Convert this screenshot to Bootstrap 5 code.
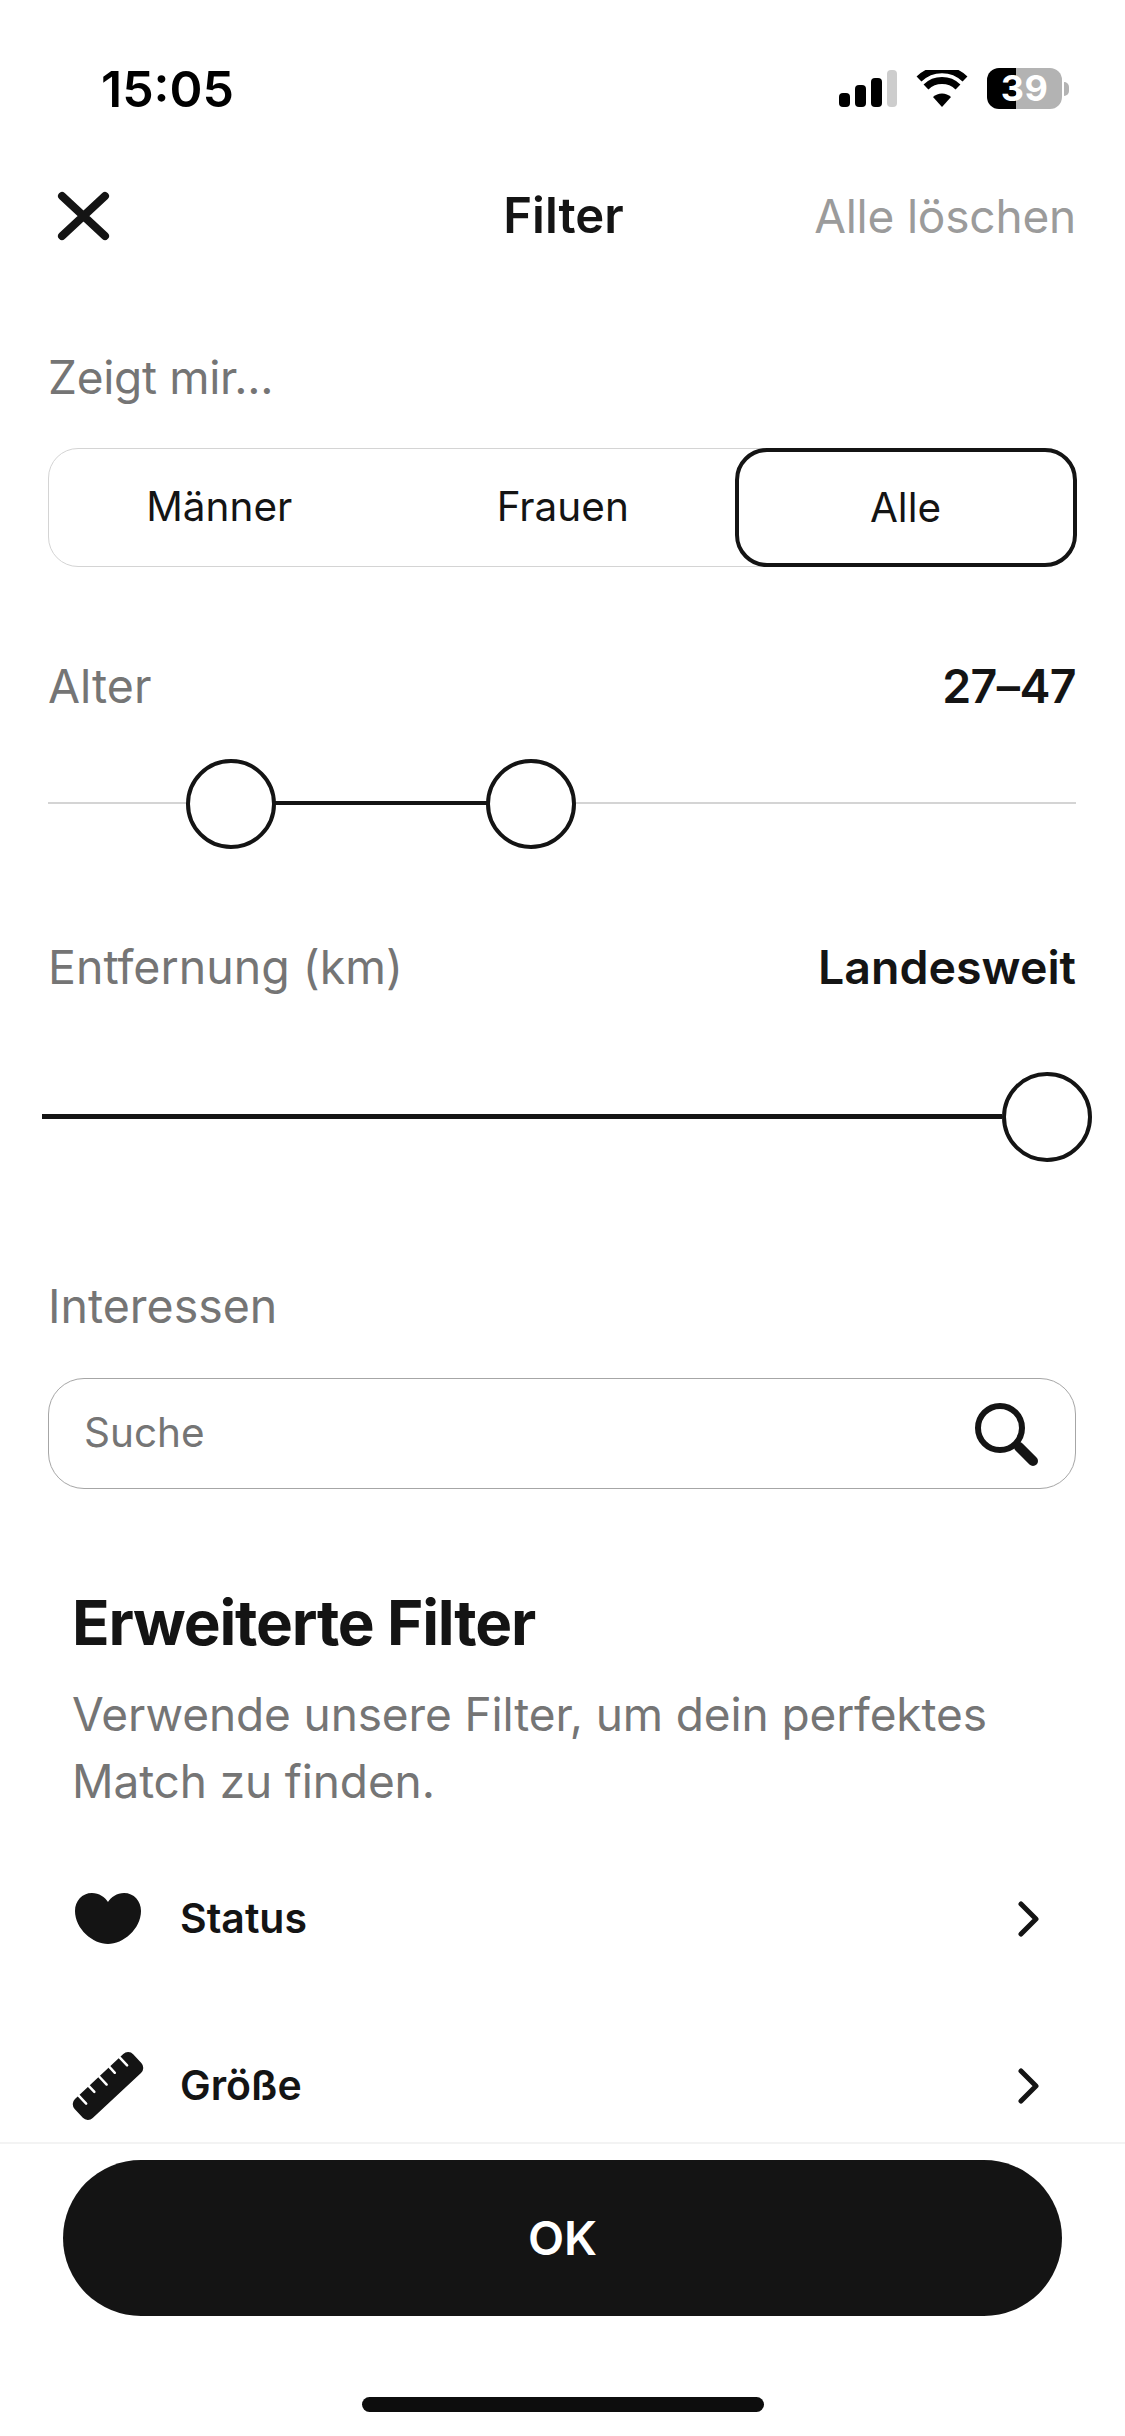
<!DOCTYPE html>
<html lang="de">
<head>
    <meta charset="UTF-8" />
    <meta name="viewport" content="width=device-width, initial-scale=1" />
    <title>Filter</title>
    <link href="https://cdn.jsdelivr.net/npm/bootstrap@5.3.0/dist/css/bootstrap.min.css" rel="stylesheet" />
    <style>
    html, body { margin: 0; background: #fff; }
    body { font-family: Inter, "Liberation Sans", sans-serif; color: #141414; }
    .screen { width: 1125px; height: 2436px; overflow: hidden; }
    .status-bar { height: 170px; padding: 65px 56px 0 101px; }
    .clock { font-size: 50px; font-weight: 600; line-height: 48px; color: #000; }
    .status-icons { gap: 19px; margin-top: 3px; }
    .batt { width: 75px; height: 41px; border-radius: 12px; background: linear-gradient(90deg, #000 0 39%, #b3b3b3 39%); color: #fff; font-size: 36px; font-weight: 700; line-height: 41px; letter-spacing: .5px; text-align: center; }
    .batt-tip { width: 5px; height: 14px; background: #b3b3b3; border-radius: 0 5px 5px 0; margin-left: 2px; }
    .top-row { height: 92px; padding: 0 49px 0 57px; }
    .top-title { font-size: 49px; font-weight: 600; }
    .top-left { width: 254px; }
    .top-right { width: 260px; }
    .clear-link { font-size: 46px; color: #9b9b9b; white-space: nowrap; letter-spacing: -.2px; }
    .body-area { flex: 1 1 0; min-height: 0; overflow: hidden; padding: 0 49px 0 48px; }
    .field-label { font-size: 46.5px; line-height: 60px; color: #757575; }
    .field-value { font-size: 46.5px; line-height: 60px; font-weight: 600; }
    .zeigt-label { margin-top: 85px; font-size: 46px; letter-spacing: -.3px; }
    .seg-box { height: 119px; margin-top: 41px; border: 1.5px solid #d4d4d4; border-radius: 30px; }
    .seg-item { flex: 1 1 0; font-size: 40.5px; text-align: center; line-height: 116px; padding-right: 3px; }
    .seg-on { flex: 0 0 342px; height: 119px; margin: -1.5px; padding-right: 0; line-height: 111px; border: 4px solid #141414; border-radius: 32px; background: #fff; }
    .alter-row { margin-top: 89px; }
    .age-value { letter-spacing: -.6px; }
    .range-age { margin-top: 43px; }
    .dist-row { margin-top: 90px; }
    .range-dist { margin-top: 75px; }
    .interest-label { margin-top: 116px; }
    .range-box { height: 88px; position: relative; }
    .range-line { position: absolute; top: 43px; height: 2px; background: #d4d4d4; left: 0; right: 0; }
    .range-fill { position: absolute; top: 42px; height: 4px; background: #141414; }
    .range-dist .range-fill { height: 5px; }
    .range-knob { position: absolute; top: 0; width: 90px; height: 90px; border-radius: 50%; border: 4px solid #141414; background: #fff; }
    .search-box { height: 111px; margin-top: 42px; padding: 0 36px 0 35px; border: 1.5px solid #a6a6a6; border-radius: 36px; font-size: 40.5px; color: #757575; }
    .adv-block { margin: 96px 0 0 24px; }
    .adv-title { font-size: 62px; line-height: 76px; font-weight: 650; margin: 0; letter-spacing: -1.2px; color: #141414; }
    .adv-text { font-size: 46px; line-height: 67px; color: #757575; margin: 20px 0 0; letter-spacing: -.12px; }
    .adv-list { margin: 20px 0 0 24px; }
    .adv-row { height: 167px; padding-right: 36px; font-size: 41px; font-weight: 600; }
    .adv-icon { width: 108px; }
    .heart-icon { margin-left: 3px; }
    .foot-bar { border-top: 2px solid #f3f3f3; height: 294px; padding: 16px 63px 0 63px; }
    .ok-btn { width: 999px; height: 156px; border-radius: 78px; background: #141414; border: 0; color: #fff; font-size: 47px; font-weight: 600; }
    .ok-btn:hover { background: #141414; color: #fff; }
    .home-bar { width: 402px; height: 15px; border-radius: 8px; background: #0d0d0d; margin: 81px 0 0 299px; }
    </style>
</head>
<body>
    <div class="screen d-flex flex-column">
        <div class="status-bar d-flex justify-content-between align-items-start">
            <span class="clock">15:05</span>
            <div class="status-icons d-flex align-items-center">
                <svg width="58" height="37" viewBox="0 0 58 37"><rect x="0" y="23" width="11" height="14" rx="4" fill="#000"/><rect x="16" y="15" width="11" height="22" rx="4" fill="#000"/><rect x="32" y="8" width="11" height="29" rx="4" fill="#000"/><rect x="48" y="0" width="10" height="37" rx="4" fill="#cdcdcd"/></svg>
                <svg width="52" height="38" viewBox="0 0 52 38"><path d="M26 37 L17 27 A13 13 0 0 1 35 27 Z" fill="#000"/><path d="M10 17 A23 23 0 0 1 42 17" fill="none" stroke="#000" stroke-width="7"/><path d="M3 9 A33 33 0 0 1 49 9" fill="none" stroke="#000" stroke-width="7"/></svg>
                <div class="d-flex align-items-center">
                    <div class="batt">39</div>
                    <div class="batt-tip"></div>
                </div>
            </div>
        </div>

        <div class="top-row d-flex justify-content-between align-items-center">
            <div class="top-left">
                <svg class="d-block" width="53" height="50" viewBox="0 0 53 50"><path d="M5 5 L48 45 M48 5 L5 45" stroke="#141414" stroke-width="8" stroke-linecap="round"/></svg>
            </div>
            <span class="top-title">Filter</span>
            <div class="top-right d-flex justify-content-end"><span class="clear-link">Alle löschen</span></div>
        </div>

        <div class="body-area">
            <div class="field-label zeigt-label">Zeigt mir...</div>
            <div class="seg-box d-flex">
                <div class="seg-item">Männer</div>
                <div class="seg-item">Frauen</div>
                <div class="seg-item seg-on">Alle</div>
            </div>

            <div class="d-flex justify-content-between alter-row">
                <span class="field-label">Alter</span>
                <span class="field-value age-value">27–47</span>
            </div>
            <div class="range-box range-age">
                <div class="range-line"></div>
                <div class="range-fill" style="left: 182px; width: 300px"></div>
                <div class="range-knob" style="left: 138px"></div>
                <div class="range-knob" style="left: 438px"></div>
            </div>

            <div class="d-flex justify-content-between dist-row">
                <span class="field-label">Entfernung (km)</span>
                <span class="field-value">Landesweit</span>
            </div>
            <div class="range-box range-dist">
                <div class="range-fill" style="left: -6px; width: 960px"></div>
                <div class="range-knob" style="left: 954px"></div>
            </div>

            <div class="field-label interest-label">Interessen</div>
            <div class="search-box d-flex justify-content-between align-items-center">
                <span>Suche</span>
                <svg width="66" height="66" viewBox="0 0 66 66"><circle cx="27" cy="27" r="22" fill="none" stroke="#141414" stroke-width="6"/><path d="M46 46 L60 60" stroke="#141414" stroke-width="10" stroke-linecap="round"/></svg>
            </div>

            <div class="adv-block">
                <h2 class="adv-title">Erweiterte Filter</h2>
                <p class="adv-text">Verwende unsere Filter, um dein perfektes<br>Match zu finden.</p>
            </div>

            <div class="adv-list">
                <div class="adv-row d-flex align-items-center">
                    <div class="adv-icon"><svg class="d-block heart-icon" width="66" height="51" viewBox="0 0 66 51"><path d="M33 9 C30 4 24 0 17 0 C7 0 0 8 0 18 C0 36 18 51 33 51 C48 51 66 36 66 18 C66 8 59 0 49 0 C42 0 36 4 33 9 Z" fill="#141414"/></svg></div>
                    <span class="flex-grow-1">Status</span>
                    <svg width="22" height="36" viewBox="0 0 22 36"><path d="M3 3 L18 18 L3 33" fill="none" stroke="#141414" stroke-width="5" stroke-linecap="round" stroke-linejoin="round"/></svg>
                </div>
                <div class="adv-row d-flex align-items-center">
                    <div class="adv-icon">
                        <svg class="d-block" width="72" height="72" viewBox="0 0 72 72">
                            <g transform="translate(36 36) rotate(-43)">
                                <rect x="-40" y="-13" width="80" height="26" rx="7" fill="#141414"/>
                                <path d="M-28 -13 V-2 M-14 -13 V-5 M0 -13 V-2 M14 -13 V-5 M28 -13 V-2" stroke="#fff" stroke-width="2.5" stroke-linecap="round"/>
                            </g>
                        </svg>
                    </div>
                    <span class="flex-grow-1">Größe</span>
                    <svg width="22" height="36" viewBox="0 0 22 36"><path d="M3 3 L18 18 L3 33" fill="none" stroke="#141414" stroke-width="5" stroke-linecap="round" stroke-linejoin="round"/></svg>
                </div>
            </div>
        </div>

        <div class="foot-bar">
            <button type="button" class="btn ok-btn">OK</button>
            <div class="home-bar"></div>
        </div>
    </div>

    <script src="https://cdn.jsdelivr.net/npm/bootstrap@5.3.0/dist/js/bootstrap.bundle.min.js"></script>
</body>
</html>
